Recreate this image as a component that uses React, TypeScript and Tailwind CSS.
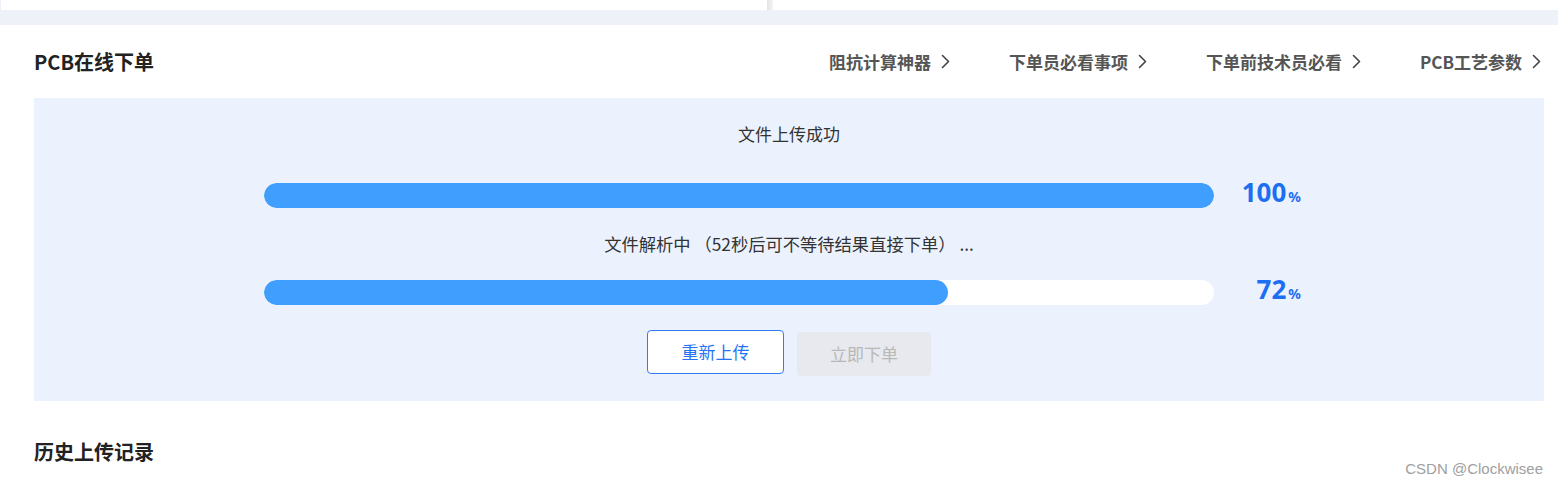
import React from "react";

const cjk = { fontFamily: '"Noto Sans CJK SC", "Noto Sans", sans-serif' };

function Chevron() {
  return (
    <svg width="9" height="15" viewBox="0 0 9 15" fill="none" className="ml-[10px]">
      <path d="M1.5 1.5L7.5 7.5L1.5 13.5" stroke="#444" strokeWidth="1.6" strokeLinecap="round" strokeLinejoin="round" />
    </svg>
  );
}

function Bar({ pct }: { pct: number }) {
  return (
    <div className="flex items-center h-[25px] w-[1037px] self-start ml-[230px]">
      <div className="w-[950px] h-[25px] rounded-full bg-white overflow-hidden">
        <div className="h-full rounded-full bg-[#409eff]" style={{ width: `${pct}%` }} />
      </div>
      <div className="flex-1 flex justify-end items-baseline mb-[7px] text-[#1d6ff2] font-bold" style={{ fontFamily: '"Noto Sans", sans-serif' }}>
        <span className="text-[26px] leading-none">{pct}</span>
        <span className="text-[14px] leading-none ml-[2px]">%</span>
      </div>
    </div>
  );
}

export default function App() {
  const links = ["阻抗计算神器", "下单员必看事项", "下单前技术员必看", "PCB工艺参数"];
  return (
    <div className="relative w-[1558px] h-[487px] bg-white overflow-hidden" style={cjk}>
      <div className="bg-[#eef1f8] pb-[15px]">
        <div className="flex h-[10px]">
          <div className="ml-[1px] w-[766px] bg-white" />
          <div className="w-[6px] bg-gradient-to-r from-[#e4e4e4] to-[#f4f4f4]" />
          <div className="flex-1 bg-white" />
        </div>
      </div>
      <div className="flex items-center justify-between h-[73px] pl-[34px] pr-[17px]">
        <div className="text-[20px] font-bold text-[#222]">PCB在线下单</div>
        <div className="flex items-center gap-[59px] text-[17px] font-bold text-[#555]">
          {links.map((l) => (
            <div key={l} className="flex items-center">
              <span>{l}</span>
              <Chevron />
            </div>
          ))}
        </div>
      </div>
      <div className="mx-[34px] mr-[14px] h-[303px] bg-[#ecf2fd] flex flex-col items-center pt-[23px]">
        <div className="text-[17px] text-[#333] leading-[26px]">文件上传成功</div>
        <div className="h-[36px]" />
        <Bar pct={100} />
        <div className="h-[23px]" />
        <div className="text-[17.3px] text-[#333] leading-[26px]">文件解析中 （52秒后可不等待结果直接下单） ...</div>
        <div className="h-[23px]" />
        <Bar pct={72} />
        <div className="flex gap-[13px] mt-[25px]">
          <button className="w-[137px] h-[44px] rounded-[4px] border border-[#2f7cf6] bg-white text-[#2573f5] text-[17px]">重新上传</button>
          <button className="w-[134px] h-[44px] mt-[2px] rounded-[4px] bg-[#e7e9ee] text-[#b8b8b8] text-[17px]">立即下单</button>
        </div>
      </div>
      <div className="pl-[34px] pt-[37px] text-[20px] font-bold text-[#222] leading-[28px]">历史上传记录</div>
      <div className="absolute right-[15px] bottom-[7px] text-[15px] text-[#a0a0a0]" style={{ fontFamily: '"Liberation Sans", Arial, sans-serif' }}>CSDN @Clockwisee</div>
    </div>
  );
}
